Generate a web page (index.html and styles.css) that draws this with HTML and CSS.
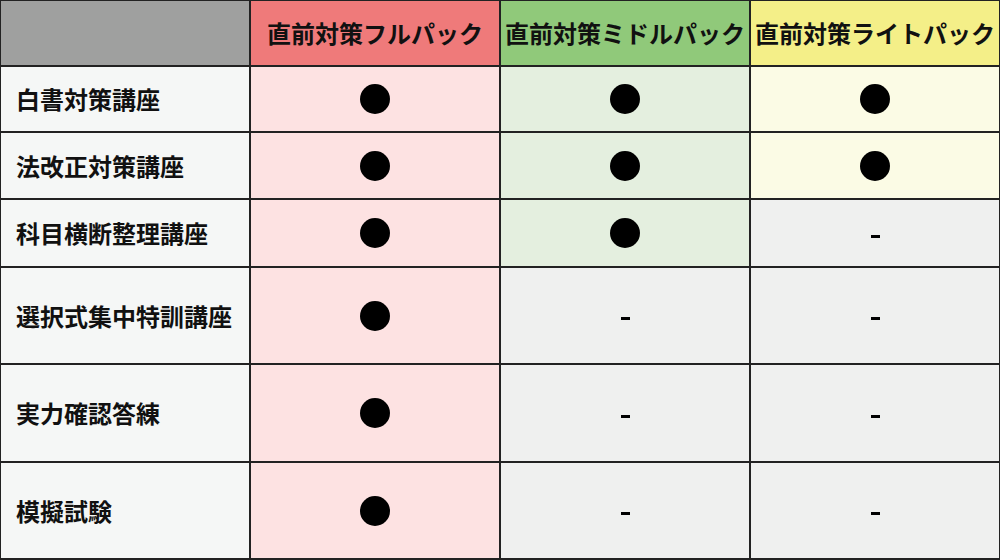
FILE: index.html
```html
<!DOCTYPE html>
<html lang="ja">
<head>
<meta charset="utf-8">
<title>直前対策パック比較</title>
<link rel="stylesheet" href="styles.css">
</head>
<body>
<div class="table">
  <div class="cell head head-blank"></div>
  <div class="cell head head-full">直前対策フルパック</div>
  <div class="cell head head-middle">直前対策ミドルパック</div>
  <div class="cell head head-lite">直前対策ライトパック</div>

  <div class="cell label">白書対策講座</div>
  <div class="cell full"><span class="dot"></span></div>
  <div class="cell middle"><span class="dot"></span></div>
  <div class="cell lite"><span class="dot"></span></div>

  <div class="cell label">法改正対策講座</div>
  <div class="cell full"><span class="dot"></span></div>
  <div class="cell middle"><span class="dot"></span></div>
  <div class="cell lite"><span class="dot"></span></div>

  <div class="cell label">科目横断整理講座</div>
  <div class="cell full"><span class="dot"></span></div>
  <div class="cell middle"><span class="dot"></span></div>
  <div class="cell none"><span class="dash"></span></div>

  <div class="cell label">選択式集中特訓講座</div>
  <div class="cell full"><span class="dot"></span></div>
  <div class="cell none"><span class="dash"></span></div>
  <div class="cell none"><span class="dash"></span></div>

  <div class="cell label">実力確認答練</div>
  <div class="cell full"><span class="dot"></span></div>
  <div class="cell none"><span class="dash"></span></div>
  <div class="cell none"><span class="dash"></span></div>

  <div class="cell label">模擬試験</div>
  <div class="cell full"><span class="dot"></span></div>
  <div class="cell none"><span class="dash"></span></div>
  <div class="cell none"><span class="dash"></span></div>
</div>
</body>
</html>
```

FILE: styles.css
```css
html, body {
  margin: 0;
  padding: 0;
  background: #ffffff;
  overflow: hidden;
}

.table {
  box-sizing: border-box;
  width: 1000px;
  height: 560px;
  display: grid;
  grid-template-columns: 248px 248px 248px 248px;
  grid-template-rows: 64px 64px 65px 66px 95px 96px 95px;
  gap: 2px;
  padding: 1px 1px 2px 1px;
  background: #222222;
  font-family: "Noto Sans CJK JP", "Noto Sans", sans-serif;
  font-weight: 700;
  color: #111111;
}

.cell {
  display: flex;
  align-items: center;
  justify-content: center;
  font-size: 24px;
  line-height: 1;
  white-space: nowrap;
}

.head-blank { background: #9fa09f; }
.head-full { background: #ef7a7a; }
.head-middle { background: #90c97a; }
.head-lite { background: #f4ef88; }

.label {
  justify-content: flex-start;
  padding-left: 15px;
  background: #f5f7f6;
  font-size: 24px;
}

.full { background: #fde2e2; }
.middle { background: #e4efdf; }
.lite { background: #fbfbe5; }
.none { background: #eff0ef; }

.dot {
  display: block;
  width: 30px;
  height: 30px;
  border-radius: 50%;
  background: #000000;
}

.dash {
  display: block;
  width: 9px;
  height: 3px;
  margin-top: 6px;
  background: #000000;
}
```
